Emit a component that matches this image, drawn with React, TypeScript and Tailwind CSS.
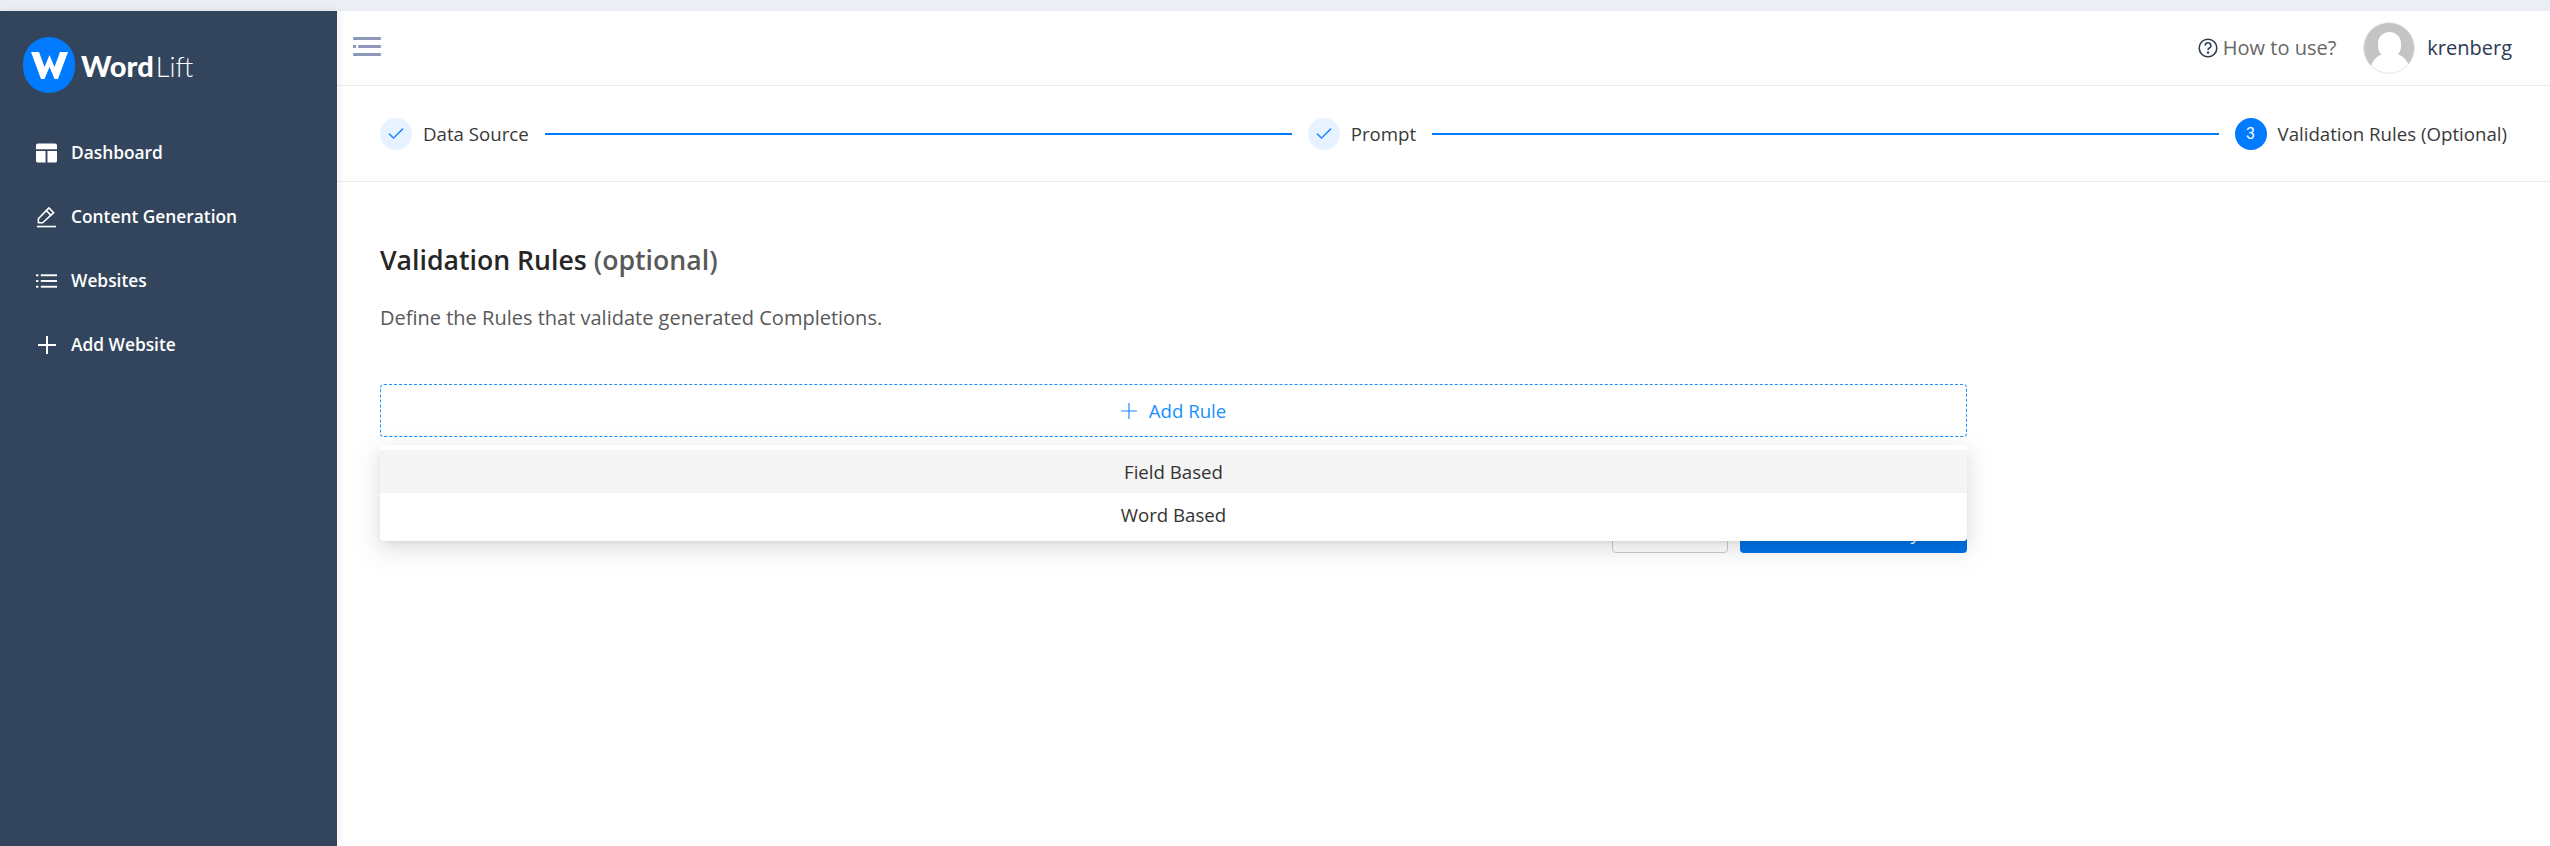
import { Check } from "lucide-react";

const font = { fontFamily: '"Open Sans", "Noto Sans", sans-serif' };

const DashboardIcon = () => (
  <svg width="22" height="20" viewBox="0 0 22 20" fill="white">
    <path d="M2 0h18a2 2 0 0 1 2 2v4H0V2a2 2 0 0 1 2-2z" />
    <path d="M0 8h10v12H2a2 2 0 0 1-2-2z" />
    <path d="M12 8h10v10a2 2 0 0 1-2 2h-8z" />
  </svg>
);

const EditIcon = () => (
  <svg width="22" height="22" viewBox="0 0 22 22" fill="none" stroke="white" strokeWidth="1.7">
    <path d="M2.5 17v-4.2L13.5 1.5l5 5L7 17z" strokeLinejoin="round" />
    <path d="M11 4.5l5 5" />
    <path d="M1 21h20" />
  </svg>
);

const ListIcon = () => (
  <svg width="22" height="14" viewBox="0 0 22 14" fill="white">
    <rect x="0" y="0" width="2.5" height="2" />
    <rect x="5" y="0" width="17" height="2" />
    <rect x="0" y="6" width="2.5" height="2" />
    <rect x="5" y="6" width="17" height="2" />
    <rect x="0" y="12" width="2.5" height="2" />
    <rect x="5" y="12" width="17" height="2" />
  </svg>
);

const PlusIcon = () => (
  <svg width="18" height="18" viewBox="0 0 18 18" stroke="white" strokeWidth="2">
    <path d="M9 0v18M0 9h18" />
  </svg>
);

const navItems = [
  { label: "Dashboard", icon: <DashboardIcon /> },
  { label: "Content Generation", icon: <EditIcon /> },
  { label: "Websites", icon: <ListIcon /> },
  { label: "Add Website", icon: <PlusIcon /> },
];

const Sidebar = () => (
  <aside className="relative z-10 w-[337px] shrink-0 bg-[#32455c] shadow-[2px_0_8px_rgba(0,0,0,0.08)]">
    <div className="mt-[26px] flex h-[56px] items-center pl-[23px]">
      <div className="flex h-[56px] w-[52px] items-center justify-center rounded-full bg-[#007aff]">
        <svg width="37" height="27" viewBox="0 0 37 27" fill="white">
          <path d="M0 0h8l5.5 15L18.5 3l5 12L29 0h8L27 27h-3.5l-5-12-5 12H10z" />
        </svg>
      </div>
      <div className="ml-[6px] flex items-baseline leading-none text-white" style={{ fontFamily: "Lato, sans-serif" }}>
        <span className="text-[29px] font-black">Word</span>
        <span className="ml-[2px] text-[27px] font-light">Lift</span>
      </div>
    </div>
    <nav className="mt-[28px] flex flex-col">
      {navItems.map((item) => (
        <div key={item.label} className="flex h-[64px] items-center">
          <div className="ml-[36px] flex w-[21px] justify-center">{item.icon}</div>
          <span className="ml-[14px] text-[17.33px] font-semibold text-white">{item.label}</span>
        </div>
      ))}
    </nav>
  </aside>
);

const Topbar = () => (
  <header className="flex h-[75px] items-center justify-between border-b border-[#ececec] pl-[16px] pr-[38px]">
    <svg width="28" height="19" viewBox="0 0 28 19" fill="#8c9ab8" className="mt-[-3px]">
      <rect x="0" y="0" width="28" height="3" rx="1" />
      <rect x="0" y="8" width="3" height="3" />
      <rect x="5" y="8" width="23" height="3" rx="1" />
      <rect x="0" y="16" width="28" height="3" rx="1" />
    </svg>
    <div className="flex items-center">
      <svg width="20" height="20" viewBox="0 0 20 20" fill="none" stroke="#2b3a55" strokeWidth="1.6">
        <circle cx="10" cy="10" r="8.8" />
        <path d="M7.2 7.6a2.8 2.8 0 1 1 4.2 2.4c-.9.5-1.4 1-1.4 2" />
        <circle cx="10" cy="14.6" r=".5" />
      </svg>
      <span className="ml-[5px] text-[20px] text-[#666]">How to use?</span>
      <div className="relative ml-[27px] h-[52px] w-[52px] overflow-hidden rounded-full border border-[#eeeeee] bg-[#c4c4c4]">
        <div className="absolute left-[14px] top-[9px] h-[26px] w-[23px] rounded-full bg-white" />
        <div className="absolute left-[7px] top-[31px] h-[30px] w-[38px] rounded-full bg-white" />
      </div>
      <span className="ml-[12px] text-[20px] text-[#2b3a55]">krenberg</span>
    </div>
  </header>
);

const DoneStep = ({ label }: { label: string }) => (
  <div className="flex items-center">
    <div className="flex h-[32px] w-[32px] items-center justify-center rounded-full bg-[#e6f2ff]">
      <Check size={20} strokeWidth={1.5} color="#007aff" />
    </div>
    <span className="ml-[11px] text-[18.67px] text-[#3a3a3a]">{label}</span>
  </div>
);

const Stepper = () => (
  <div className="flex h-[96px] items-center border-b border-[#ececec] px-[43px]">
    <DoneStep label="Data Source" />
    <div className="mx-[16px] h-[2px] w-[747px] bg-[#007aff]" />
    <DoneStep label="Prompt" />
    <div className="mx-[16px] h-[2px] flex-1 bg-[#007aff]" />
    <div className="flex items-center">
      <div className="flex h-[32px] w-[32px] items-center justify-center rounded-full bg-[#007aff] text-[16px] text-white" style={{ fontFamily: "Roboto, sans-serif" }}>
        3
      </div>
      <span className="ml-[11px] text-[18.67px] text-[#3a3a3a]">Validation Rules (Optional)</span>
    </div>
  </div>
);

const RulesForm = () => (
  <div className="w-[1587px]">
    <h2 className="mt-[60px] text-[26.67px] font-semibold leading-[36px] text-[#262626]">
      Validation Rules <span className="text-[#595959]">(optional)</span>
    </h2>
    <p className="mt-[26px] text-[20px] leading-[28px] text-[#595959]">
      Define the Rules that validate generated Completions.
    </p>
    <div className="relative mt-[52px]">
      <button className="flex h-[53px] w-full items-center justify-center gap-[12px] rounded-[4px] border border-dashed border-[#1890ff] text-[18.67px] text-[#1890ff]">
        <svg width="16" height="16" viewBox="0 0 16 16" stroke="#1890ff" strokeWidth="1.2">
          <path d="M8 0v16M0 8h16" />
        </svg>
        Add Rule
      </button>
      <div className="mt-[76px] flex justify-end gap-[12px]">
        <button className="h-[40px] w-[116px] rounded-[4px] border border-[#cccccc] text-[18.67px] text-[#333]">
          Back
        </button>
        <button className="h-[40px] w-[227px] rounded-[4px] bg-[#0073e6] text-[18.67px] text-white">
          Save and Verify
        </button>
      </div>
      <div className="absolute left-0 right-0 top-[61px] rounded-[4px] bg-white py-[5px] text-[18.67px] text-[#333] shadow-[0_6px_16px_rgba(0,0,0,0.08),0_9px_28px_8px_rgba(0,0,0,0.05),0_3px_6px_-4px_rgba(0,0,0,0.12)]">
        <div className="flex h-[43px] items-center justify-center bg-[#f5f5f5]">Field Based</div>
        <div className="flex h-[43px] items-center justify-center">Word Based</div>
      </div>
    </div>
  </div>
);

export default function App() {
  return (
    <div className="flex h-[846px] flex-col overflow-hidden bg-white" style={font}>
      <div className="h-[11px] shrink-0 bg-[#ebeff4]" />
      <div className="flex flex-1">
        <Sidebar />
        <main className="flex-1">
          <Topbar />
          <Stepper />
          <div className="px-[43px]">
            <RulesForm />
          </div>
        </main>
      </div>
    </div>
  );
}
